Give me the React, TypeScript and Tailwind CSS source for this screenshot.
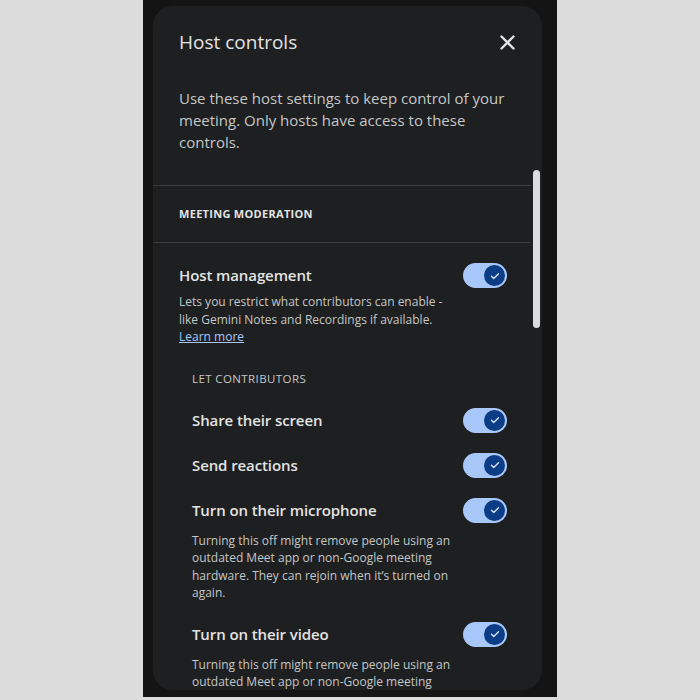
const font = { fontFamily: '"Open Sans", Roboto, sans-serif' };

const Toggle = () => {
  return (
    <div className="w-[44px] h-[25px] rounded-full bg-[#a8c7fa] flex items-center justify-end pr-[2px] shrink-0">
      <div className="w-[21px] h-[21px] rounded-full bg-[#0b3c86] flex items-center justify-center">
        <svg width="12" height="12" viewBox="0 0 24 24" fill="none">
          <path d="M5 12.5l4.5 4.5L19 7.5" stroke="#d3e3fd" strokeWidth="2.8" strokeLinecap="round" strokeLinejoin="round" />
        </svg>
      </div>
    </div>
  );
};

const Row = ({ title, desc }: { title: string; desc?: string }) => {
  return (
    <div className="flex flex-col">
      <div className="flex items-center justify-between h-[25px]">
        <span className="text-[15px] font-semibold text-[#e3e3e3] tracking-[-0.1px]">{title}</span>
        <Toggle />
      </div>
      {desc && (
        <p className="mt-[9px] text-[12px] leading-[17.5px] text-[#c4c7c5] pr-[50px]">{desc}</p>
      )}
    </div>
  );
};

export default function App() {
  return (
    <div className="w-[700px] h-[700px] bg-[#dcdcdc] flex justify-center" style={font}>
      <div className="w-[414px] h-[697px] bg-[#141414] pl-[10px] pr-[15px] pt-[6px] pb-[7px]">
        <div className="h-full rounded-[20px] bg-[#1e1f21] overflow-hidden flex flex-col">
          <div className="flex items-center justify-between pl-[26px] pr-[27px] pt-[22px] h-[50px] shrink-0">
            <h2 className="text-[19px] leading-[28px] text-[#e3e3e3]">Host controls</h2>
            <svg width="15" height="15" viewBox="0 0 15 15" fill="none">
              <path d="M1.5 1.5l12 12M13.5 1.5l-12 12" stroke="#e3e3e3" strokeWidth="2.4" strokeLinecap="round" />
            </svg>
          </div>
          <div className="flex flex-1 min-h-0">
            <div className="flex-1 min-w-0">
              <p className="mt-[31px] pl-[26px] pr-[20px] text-[15px] leading-[22px] text-[#c4c7c5]">
                Use these host settings to keep control of your meeting. Only hosts have access to these controls.
              </p>
              <div className="mt-[32px] border-t border-b border-[#3a3b3d] h-[58px] flex items-center pl-[26px]">
                <span className="text-[11px] font-bold tracking-[0.3px] text-[#e3e3e3]">MEETING MODERATION</span>
              </div>
              <div className="pl-[26px] pr-[24px] pt-[20px]">
                <div className="flex items-center justify-between h-[25px]">
                  <span className="text-[15px] font-semibold text-[#e3e3e3] tracking-[-0.1px]">Host management</span>
                  <Toggle />
                </div>
                <p className="mt-[5px] text-[12px] leading-[17.5px] text-[#c4c7c5] pr-[50px]">
                  Lets you restrict what contributors can enable - like Gemini Notes and Recordings if available.
                </p>
                <a className="block text-[12px] leading-[17.5px] text-[#a8c7fa] underline">Learn more</a>
                <div className="pl-[13px] flex flex-col">
                  <span className="mt-[25px] text-[11.5px] leading-[16px] font-medium text-[#c4c7c5] tracking-[0.4px]">LET CONTRIBUTORS</span>
                  <div className="mt-[21px] flex flex-col gap-[20px]">
                    <Row title="Share their screen" />
                    <Row title="Send reactions" />
                    <Row
                      title="Turn on their microphone"
                      desc="Turning this off might remove people using an outdated Meet app or non-Google meeting hardware. They can rejoin when it’s turned on again."
                    />
                    <Row
                      title="Turn on their video"
                      desc="Turning this off might remove people using an outdated Meet app or non-Google meeting hardware. They can rejoin when it’s turned on again."
                    />
                  </div>
                </div>
              </div>
            </div>
            <div className="w-[11px] shrink-0 pl-[2px] pt-[114px]">
              <div className="w-[7px] h-[158px] rounded-full bg-[#dadce0]" />
            </div>
          </div>
        </div>
      </div>
    </div>
  );
}
